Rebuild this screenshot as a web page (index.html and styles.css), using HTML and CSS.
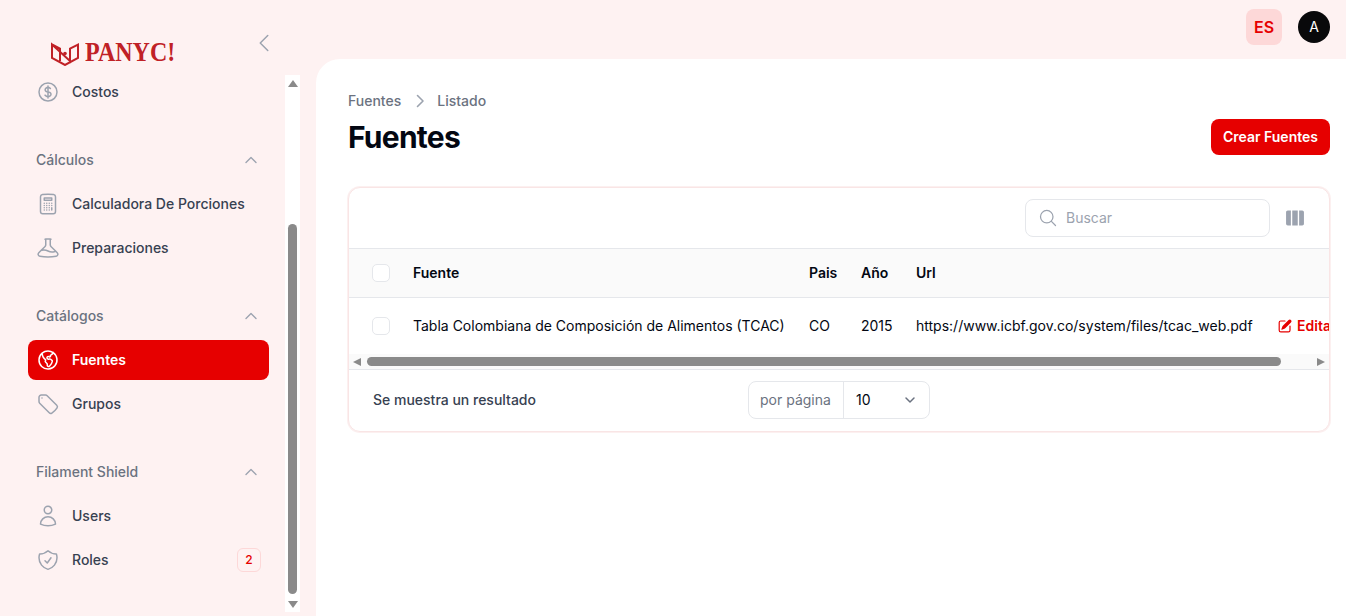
FILE: index.html
```html
<!DOCTYPE html>
<html lang="es">
<head>
<meta charset="utf-8">
<title>Fuentes</title>
<link rel="stylesheet" href="styles.css">
</head>
<body>
<aside class="sidebar">
  <div class="side-head">
    <div class="logo">
      <svg class="logo-mark" viewBox="0 0 28 24" fill="none" stroke="currentColor" stroke-width="2"><path d="M1 2.5L9 6.5V19M19 19V6.5L27 2.5V16l-13 7-13-7V2.5z"/><circle cx="14" cy="11.5" r="1.8" fill="currentColor" stroke="none"/></svg>
      <span class="logo-text">PANYC!</span>
    </div>
    <svg class="collapse" viewBox="0 0 24 24" fill="none" stroke="currentColor" stroke-width="1.5" stroke-linecap="round" stroke-linejoin="round"><path d="M15.75 19.5L8.25 12l7.5-7.5"/></svg>
  </div>
  <div class="side-body">
    <nav class="nav">
      <div class="nav-inner">
        <a class="item"><svg class="ico" viewBox="0 0 24 24" fill="none" stroke="currentColor" stroke-width="1.5" stroke-linecap="round" stroke-linejoin="round"><path d="M12 6v12m-3-2.818l.879.659c1.171.879 3.07.879 4.242 0 1.172-.879 1.172-2.303 0-3.182C13.536 12.219 12.768 12 12 12c-.725 0-1.45-.22-2.003-.659-1.106-.879-1.106-2.303 0-3.182s2.9-.879 4.006 0l.415.33M21 12a9 9 0 11-18 0 9 9 0 0118 0z"/></svg><span>Costos</span></a>

        <div class="group-label"><span>Cálculos</span><svg class="group-chev" viewBox="0 0 24 24" fill="none" stroke="currentColor" stroke-width="2" stroke-linecap="round" stroke-linejoin="round"><path d="M4.5 15.75l7.5-7.5 7.5 7.5"/></svg></div>
        <div class="items">
          <a class="item"><svg class="ico" viewBox="0 0 24 24" fill="none" stroke="currentColor" stroke-width="1.5" stroke-linecap="round" stroke-linejoin="round"><path d="M15.75 15.75V18m-7.5-6.75h.008v.008H8.25v-.008zm0 2.25h.008v.008H8.25V13.5zm0 2.25h.008v.008H8.25v-.008zm0 2.25h.008v.008H8.25V18zm2.498-6.75h.007v.008h-.007v-.008zm0 2.25h.007v.008h-.007V13.5zm0 2.25h.007v.008h-.007v-.008zm0 2.25h.007v.008h-.007V18zm2.504-6.75h.008v.008h-.008v-.008zm0 2.25h.008v.008h-.008V13.5zm0 2.25h.008v.008h-.008v-.008zm0 2.25h.008v.008h-.008V18zm2.498-6.75h.008v.008h-.008v-.008zm0 2.25h.008v.008h-.008V13.5zM8.25 6h7.5v2.25h-7.5V6zM12 2.25c-1.892 0-3.758.11-5.593.322C5.307 2.7 4.5 3.65 4.5 4.757V19.5a2.25 2.25 0 002.25 2.25h10.5a2.25 2.25 0 002.25-2.25V4.757c0-1.108-.806-2.057-1.907-2.185A48.507 48.507 0 0012 2.25z"/></svg><span>Calculadora De Porciones</span></a>
          <a class="item"><svg class="ico" viewBox="0 0 24 24" fill="none" stroke="currentColor" stroke-width="1.5" stroke-linecap="round" stroke-linejoin="round"><path d="M9.75 3.104v5.714a2.25 2.25 0 01-.659 1.591L5 14.5M9.75 3.104c-.251.023-.501.05-.75.082m.75-.082a24.301 24.301 0 014.5 0m0 0v5.714c0 .597.237 1.17.659 1.591L19.8 15.3M14.25 3.104c.251.023.501.05.75.082M19.8 15.3l-1.57.393A9.065 9.065 0 0112 15a9.065 9.065 0 00-6.23-.693L5 14.5m14.8.8l1.402 1.402c1.232 1.232.65 3.318-1.067 3.611A48.309 48.309 0 0112 21c-2.773 0-5.491-.235-8.135-.687-1.718-.293-2.3-2.379-1.067-3.61L5 14.5"/></svg><span>Preparaciones</span></a>
        </div>

        <div class="group-label"><span>Catálogos</span><svg class="group-chev" viewBox="0 0 24 24" fill="none" stroke="currentColor" stroke-width="2" stroke-linecap="round" stroke-linejoin="round"><path d="M4.5 15.75l7.5-7.5 7.5 7.5"/></svg></div>
        <div class="items">
          <a class="item active"><svg class="ico" viewBox="0 0 24 24" fill="none" stroke="currentColor" stroke-width="1.5" stroke-linecap="round" stroke-linejoin="round"><path d="M6.115 5.19l.319 1.913A6 6 0 008.11 10.36L9.75 12l-.387.775c-.217.433-.132.956.21 1.298l1.348 1.348c.21.21.329.497.329.795v1.089c0 .426.24.815.622 1.006l.153.076c.433.217.956.132 1.298-.21l.723-.723a8.7 8.7 0 002.288-4.042 1.087 1.087 0 00-.358-1.099l-1.33-1.108c-.251-.21-.582-.299-.905-.245l-1.17.195a1.125 1.125 0 01-.98-.314l-.295-.295a1.125 1.125 0 010-1.591l.13-.132a1.125 1.125 0 011.3-.21l.603.302a.809.809 0 001.086-1.086L14.25 7.5l1.256-.837a4.5 4.5 0 001.528-1.732l.146-.292M6.115 5.19A9 9 0 1017.18 4.64M6.115 5.19A8.965 8.965 0 0112 3c1.929 0 3.716.607 5.18 1.64"/></svg><span>Fuentes</span></a>
          <a class="item"><svg class="ico" viewBox="0 0 24 24" fill="none" stroke="currentColor" stroke-width="1.5" stroke-linecap="round" stroke-linejoin="round"><path d="M9.568 3H5.25A2.25 2.25 0 003 5.25v4.318c0 .597.237 1.17.659 1.591l9.581 9.581c.699.699 1.78.872 2.607.33a18.095 18.095 0 005.223-5.223c.542-.827.369-1.908-.33-2.607L11.16 3.66A2.25 2.25 0 009.568 3z"/><path d="M6 6h.008v.008H6V6z"/></svg><span>Grupos</span></a>
        </div>

        <div class="group-label"><span>Filament Shield</span><svg class="group-chev" viewBox="0 0 24 24" fill="none" stroke="currentColor" stroke-width="2" stroke-linecap="round" stroke-linejoin="round"><path d="M4.5 15.75l7.5-7.5 7.5 7.5"/></svg></div>
        <div class="items">
          <a class="item"><svg class="ico" viewBox="0 0 24 24" fill="none" stroke="currentColor" stroke-width="1.5" stroke-linecap="round" stroke-linejoin="round"><path d="M15.75 6a3.75 3.75 0 11-7.5 0 3.75 3.75 0 017.5 0zM4.501 20.118a7.5 7.5 0 0114.998 0A17.933 17.933 0 0112 21.75c-2.676 0-5.216-.584-7.499-1.632z"/></svg><span>Users</span></a>
          <a class="item"><svg class="ico" viewBox="0 0 24 24" fill="none" stroke="currentColor" stroke-width="1.5" stroke-linecap="round" stroke-linejoin="round"><path d="M9 12.75L11.25 15 15 9.75m-3-7.036A11.959 11.959 0 013.598 6 11.99 11.99 0 003 9.749c0 5.592 3.824 10.29 9 11.623 5.176-1.332 9-6.03 9-11.622 0-1.31-.21-2.571-.598-3.751h-.152c-3.196 0-6.1-1.248-8.25-3.286z"/></svg><span>Roles</span><b class="badge">2</b></a>
        </div>
      </div>
    </nav>
    <div class="vscroll">
      <i class="arrow-up"></i>
      <i class="vthumb"></i>
      <i class="arrow-down"></i>
    </div>
  </div>
</aside>

<div class="main">
  <header class="topbar">
    <button class="lang">ES</button>
    <div class="avatar">A</div>
  </header>
  <main class="panel">
    <div class="crumbs">
      <span>Fuentes</span>
      <svg class="crumb-sep" viewBox="0 0 20 20" fill="none" stroke="currentColor" stroke-width="1.6" stroke-linecap="round" stroke-linejoin="round"><path d="M7.5 4.5L13 10l-5.5 5.5"/></svg>
      <span>Listado</span>
    </div>
    <div class="page-head">
      <h1>Fuentes</h1>
      <button class="primary">Crear Fuentes</button>
    </div>
    <section class="card">
      <div class="toolbar">
        <label class="search">
          <svg class="search-ico" viewBox="0 0 24 24" fill="none" stroke="currentColor" stroke-width="1.5" stroke-linecap="round" stroke-linejoin="round"><path d="M21 21l-5.197-5.197m0 0A7.5 7.5 0 105.196 5.196a7.5 7.5 0 0010.607 10.607z"/></svg>
          <span>Buscar</span>
        </label>
        <svg class="cols-ico" viewBox="0 0 24 24" fill="currentColor"><path d="M15 3.75H9v16.5h6V3.75zM16.5 20.25h3.375c1.035 0 1.875-.84 1.875-1.875V5.625c0-1.036-.84-1.875-1.875-1.875H16.5v16.5zM4.125 3.75H7.5v16.5H4.125a1.875 1.875 0 01-1.875-1.875V5.625c0-1.036.84-1.875 1.875-1.875z"/></svg>
      </div>
      <div class="table-wrap">
        <table>
          <colgroup>
            <col class="c-check"><col class="c-name"><col class="c-pais"><col class="c-ano"><col class="c-url"><col class="c-act">
          </colgroup>
          <thead>
            <tr><th><i class="check"></i></th><th>Fuente</th><th>Pais</th><th>Año</th><th>Url</th><th></th></tr>
          </thead>
          <tbody>
            <tr>
              <td><i class="check"></i></td>
              <td>Tabla Colombiana de Composición de Alimentos (TCAC)</td>
              <td>CO</td>
              <td>2015</td>
              <td>https://www.icbf.gov.co/system/files/tcac_web.pdf</td>
              <td><span class="edit"><svg class="edit-ico" viewBox="0 0 20 20" fill="currentColor"><path d="M5.433 13.917l1.262-3.155A4 4 0 017.58 9.42l6.92-6.918a2.121 2.121 0 013 3l-6.92 6.918c-.383.383-.84.685-1.343.886l-3.154 1.262a.5.5 0 01-.65-.65z"/><path d="M3.5 5.75c0-.69.56-1.25 1.25-1.25H10A.75.75 0 0010 3H4.75A2.75 2.75 0 002 5.75v9.5A2.75 2.75 0 004.75 18h9.5A2.75 2.75 0 0017 15.25V10a.75.75 0 00-1.5 0v5.25c0 .69-.56 1.25-1.25 1.25h-9.5c-.69 0-1.25-.56-1.25-1.25v-9.5z"/></svg>Editar</span></td>
            </tr>
          </tbody>
        </table>
      </div>
      <div class="hscroll">
        <i class="arrow-left"></i>
        <i class="hthumb"></i>
        <i class="arrow-right"></i>
      </div>
      <div class="card-foot">
        <span class="count">Se muestra un resultado</span>
        <div class="per-page">
          <span class="pp-label">por página</span>
          <span class="pp-value">10<svg class="pp-chev" viewBox="0 0 20 20" fill="none" stroke="currentColor" stroke-width="1.5" stroke-linecap="round" stroke-linejoin="round"><path d="M6 8l4 4 4-4"/></svg></span>
        </div>
      </div>
    </section>
  </main>
</div>
</body>
</html>
```
FILE: styles.css
```css
* { box-sizing: border-box; }
html, body { height: 100%; }
body {
  margin: 0;
  height: 616px;
  overflow: hidden;
  display: flex;
  background: #fef2f2;
  font-family: Inter, "Liberation Sans", sans-serif;
  font-size: 14px;
  line-height: 20px;
  color: #030712;
}

/* Sidebar */
.sidebar {
  width: 300px;
  flex: none;
  display: flex;
  flex-direction: column;
  padding-bottom: 4px;
}
.side-head {
  height: 75px;
  flex: none;
  display: flex;
  justify-content: space-between;
  align-items: flex-start;
  padding: 0 24px 0 51px;
}
.logo {
  display: flex;
  align-items: flex-start;
  gap: 6px;
  margin-top: 42px;
  color: #c02126;
}
.logo-mark { width: 28px; height: 24px; display: block; }
.logo-text {
  font-family: "Liberation Serif", serif;
  font-weight: 700;
  font-size: 27px;
  line-height: 21px;
  transform: scaleX(0.89);
  transform-origin: left center;
}
.collapse { width: 24px; height: 24px; margin-top: 31px; color: #9ca3af; }
.side-body { flex: 1; min-height: 0; display: flex; }
.nav { width: 285px; flex: none; overflow: hidden; padding: 0 16px 0 28px; }
.nav-inner { margin-top: -3px; }
.items { display: flex; flex-direction: column; gap: 4px; }
.item {
  height: 40px;
  display: flex;
  align-items: center;
  gap: 12px;
  padding: 0 8px;
  border-radius: 8px;
  font-weight: 500;
  color: #374151;
}
.ico { width: 24px; height: 24px; flex: none; color: #9ca3af; }
.item.active { background: #e60000; color: #fff; font-weight: 600; }
.item.active .ico { color: #fff; }
.group-label {
  height: 36px;
  margin: 30px 0 6px;
  display: flex;
  align-items: center;
  justify-content: space-between;
  padding: 0 0 0 8px;
  font-weight: 500;
  color: #6b7280;
}
.group-chev { width: 16px; height: 16px; margin-right: 10px; margin-top: -1px; color: #9ca3af; }
.badge {
  margin-left: auto;
  width: 24px;
  height: 24px;
  display: flex;
  align-items: center;
  justify-content: center;
  border: 1px solid #fdd8d8;
  border-radius: 6px;
  font-size: 12px;
  font-weight: 500;
  color: #e60000;
}

/* Vertical scrollbar */
.vscroll {
  width: 15px;
  flex: none;
  background: #fff;
  display: flex;
  flex-direction: column;
  align-items: center;
  padding-top: 5px;
}
.arrow-up, .arrow-down { width: 0; height: 0; border-left: 5px solid transparent; border-right: 5px solid transparent; }
.arrow-up { border-bottom: 7px solid #8a8a8a; margin-bottom: 137px; }
.vthumb { width: 9px; height: 370px; border-radius: 5px; background: #8a8a8a; }
.arrow-down { border-top: 7px solid #8a8a8a; margin-top: 7px; }

/* Main */
.main { flex: 1; min-width: 0; display: flex; flex-direction: column; }
.topbar {
  height: 59px;
  flex: none;
  display: flex;
  justify-content: flex-end;
  align-items: flex-start;
  gap: 16px;
  padding: 9px 16px 0 0;
}
.lang {
  width: 36px;
  height: 36px;
  padding: 0;
  border: 0;
  border-radius: 8px;
  background: #fdd8d8;
  color: #e60000;
  font: 600 16px/24px Inter, "Liberation Sans", sans-serif;
}
.avatar {
  width: 32px;
  height: 32px;
  margin-top: 2px;
  border-radius: 50%;
  background: #09090b;
  color: #fff;
  display: flex;
  align-items: center;
  justify-content: center;
  font-size: 14px;
}
.panel {
  flex: 1;
  margin-left: 16px;
  padding: 32px 16px 0 32px;
  background: #fff;
  border-top-left-radius: 24px;
  min-height: 0;
}
.crumbs { display: flex; align-items: center; font-weight: 500; color: #6b7280; height: 20px; }
.crumb-sep { width: 20px; height: 20px; margin: 0 7px 0 9px; color: #9ca3af; }
.page-head { display: flex; justify-content: space-between; align-items: center; margin-top: 8px; height: 36px; }
h1 { margin: 0; font-size: 30px; line-height: 36px; font-weight: 700; letter-spacing: -0.75px; color: #030712; }
.primary {
  height: 36px;
  padding: 0 12px;
  border: 0;
  border-radius: 8px;
  background: #e60000;
  color: #fff;
  font: 600 14px/20px Inter, "Liberation Sans", sans-serif;
}

/* Card */
.card {
  margin-top: 32px;
  height: 245px;
  border: 1px solid #f9e5e5;
  box-shadow: 0 0 0 1px #fcf0f0;
  border-radius: 12px;
  overflow: hidden;
  background: #fff;
}
.toolbar {
  height: 61px;
  display: flex;
  align-items: center;
  justify-content: flex-end;
  gap: 14px;
  padding-right: 23px;
  border-bottom: 1px solid #e5e7eb;
}
.search {
  width: 245px;
  height: 38px;
  display: flex;
  align-items: center;
  gap: 8px;
  padding-left: 12px;
  border: 1px solid #e5e7eb;
  border-radius: 8px;
  color: #9ca3af;
}
.search-ico { width: 20px; height: 20px; }
.cols-ico { width: 22px; height: 22px; color: #9ca3af; }
.table-wrap { height: 105px; overflow: hidden; }
table { width: 1100px; table-layout: fixed; border-collapse: separate; border-spacing: 0; }
.c-check { width: 64px; }
.c-name { width: 396px; }
.c-pais { width: 52px; }
.c-ano { width: 55px; }
.c-url { width: 362px; }
.c-act { width: 171px; }
th {
  height: 49px;
  padding: 0;
  text-align: left;
  font-weight: 600;
  background: #fafafa;
  border-bottom: 1px solid #e5e7eb;
  color: #030712;
}
td { height: 56px; padding: 0; color: #030712; white-space: nowrap; }
.check {
  display: block;
  width: 18px;
  height: 18px;
  margin-left: 23px;
  background: #fff;
  border: 1px solid #e5e7eb;
  border-radius: 5px;
}
.edit { display: flex; align-items: center; gap: 4px; color: #e60000; font-weight: 600; }
.edit-ico { width: 16px; height: 16px; flex: none; margin-left: -1px; }

/* Horizontal scrollbar */
.hscroll {
  height: 16px;
  display: flex;
  align-items: center;
  background: #fafafa;
  border-bottom: 1px solid #e5e7eb;
  padding: 0 4px;
}
.arrow-left, .arrow-right { width: 0; height: 0; border-top: 4.5px solid transparent; border-bottom: 4.5px solid transparent; }
.arrow-left { border-right: 8px solid #8a8a8a; margin-right: 6px; }
.hthumb { width: 914px; height: 9px; border-radius: 5px; background: #8a8a8a; }
.arrow-right { border-left: 8px solid #8a8a8a; margin-left: 36px; }
.card-foot {
  height: 61px;
  display: flex;
  align-items: center;
  padding: 0 0 1px 24px;
}
.count { width: 375px; font-weight: 500; color: #374151; }
.per-page {
  width: 182px;
  height: 38px;
  display: flex;
  border: 1px solid #e5e7eb;
  border-radius: 8px;
}
.pp-label { width: 95px; display: flex; align-items: center; padding-left: 11px; color: #6b7280; border-right: 1px solid #e5e7eb; }
.pp-value { flex: 1; display: flex; align-items: center; justify-content: space-between; padding: 0 9px 0 12px; color: #030712; }
.pp-chev { width: 20px; height: 20px; color: #6b7280; }
```
